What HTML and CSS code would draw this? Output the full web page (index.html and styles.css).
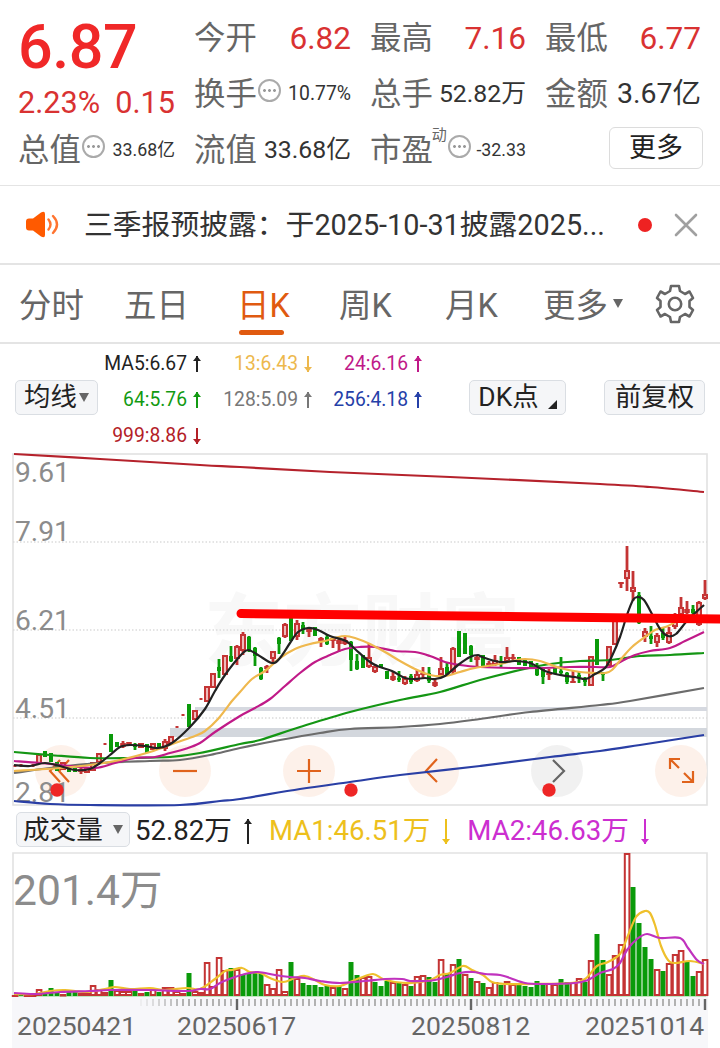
FILE: index.html
```html
<!DOCTYPE html>
<html lang="zh-CN">
<head>
    <meta charset="UTF-8">
    <meta name="viewport" content="width=device-width, initial-scale=1.0">
    <title>日K</title>
    <link rel="stylesheet" href="styles.css">
</head>
<body>

<header class="quote">
    <div class="price">6.87</div>
    <div class="change"><span>2.23%</span><span>0.15</span></div>
    <div class="stat open"><span class="name">今开</span><span class="value red">6.82</span></div>
    <div class="stat high"><span class="name">最高</span><span class="value red">7.16</span></div>
    <div class="stat low"><span class="name">最低</span><span class="value red">6.77</span></div>
    <div class="stat turnover"><span class="name">换手<i class="dots"></i></span><span class="value small">10.77%</span></div>
    <div class="stat"><span class="name">总手</span><span class="value medium">52.82万</span></div>
    <div class="stat"><span class="name">金额</span><span class="value large">3.67亿</span></div>
    <div class="stat"><span class="name">总值<i class="dots"></i></span><span class="value tiny">33.68亿</span></div>
    <div class="stat"><span class="name">流值</span><span class="value medium">33.68亿</span></div>
    <div class="stat"><span class="name">市盈<sup>动</sup><i class="dots"></i></span><span class="value tiny">-32.33</span></div>
    <div class="stat more"><button>更多</button></div>
</header>

<section class="notice">
    <svg class="speaker" width="34" height="30" viewBox="0 0 34 30">
        <path d="M4 8.5H8L16 2.5Q20 0.5 20 4V25Q20 28.500 16 26.500L8 20.500H4Q1 20.500 1 17.500V11.500Q1 8.500 4 8.500Z" fill="#ff5a00"/>
        <path d="M23.500 9.500q4 5 0 10M28 6q8 8.500 0 17" fill="none" stroke="#ff7430" stroke-width="2.4" stroke-linecap="round"/>
    </svg>
    <span class="notice-text">三季报预披露：于2025-10-31披露2025...</span>
    <span class="red-dot"></span>
    <svg class="close" width="24" height="24" viewBox="0 0 24 24">
        <path d="M2 2l20 20M22 2L2 22" stroke="#a0a0a0" stroke-width="2.6" stroke-linecap="round"/>
    </svg>
</section>

<nav class="tabs">
    <span>分时</span>
    <span>五日</span>
    <span class="active">日K</span>
    <span>周K</span>
    <span>月K</span>
    <span>更多<i class="caret"></i></span>
    <svg class="gear" width="40" height="40" viewBox="-20 -20 40 40">
        <path d="M-4 -18H4L5 -13L10 -10L14.500 -12.500L18 -6L14.500 -3V3L18 6L14.500 12.500L10 10L5 13L4 18H-4L-5 13L-10 10L-14.500 12.500L-18 6L-14.500 3V-3L-18 -6L-14.500 -12.500L-10 -10L-5 -13Z"/>
        <circle r="6.2"/>
    </svg>
</nav>

<section class="averages">
    <button class="chip ma">均线<i class="caret"></i></button>
    <div class="legend">
        <span class="black">MA5:6.67<i class="arrow up"></i></span>
        <span class="gold">13:6.43<i class="arrow down"></i></span>
        <span class="magenta">24:6.16<i class="arrow up"></i></span>
        <span class="green">64:5.76<i class="arrow up"></i></span>
        <span class="gray">128:5.09<i class="arrow up"></i></span>
        <span class="blue">256:4.18<i class="arrow up"></i></span>
        <span class="brick">999:8.86<i class="arrow down"></i></span>
    </div>
    <button class="chip dk">DK点<i class="corner"></i></button>
    <button class="chip adjust">前复权</button>
</section>

<svg class="chart" id="priceChart" viewBox="0 450 720 360"></svg>

<section class="volume-bar">
    <button class="chip vol">成交量<i class="caret"></i></button>
    <span class="black">52.82万<i class="arrow up"></i></span>
    <span class="vol-gold">MA1:46.51万<i class="arrow down"></i></span>
    <span class="vol-purple">MA2:46.63万<i class="arrow down"></i></span>
</section>

<svg class="chart" id="volumeChart" viewBox="0 850 720 147"></svg>

<footer class="axis">
    <svg id="ticks" width="696" height="14" viewBox="12 997 696 14"></svg>
    <div class="dates">
        <span>20250421</span>
        <span>20250617</span>
        <span>20250812</span>
        <span>20251014</span>
    </div>
</footer>

<script src="chart.js"></script>
</body>
</html>
```
FILE: styles.css
```css
* {
    box-sizing: border-box;
}
body {
    margin: 0;
    width: 720px;
    height: 1048px;
    overflow: hidden;
    background: #fff;
    color: #333;
    font-family: Roboto, "Noto Sans CJK SC", sans-serif;
}
button {
    font-family: inherit;
    color: #222;
    padding: 0;
}
i {
    font-style: normal;
    display: inline-block;
    flex: none;
}
svg {
    display: block;
}

/* quote header */
.quote {
    height: 186px;
    padding: 11px 19px 0 18px;
    display: grid;
    grid-template-columns: 157px 157px 156px 156px;
    grid-template-rows: 56px 56px 56px;
    column-gap: 19px;
    border-bottom: 1px solid #e4e4e4;
}
.price {
    grid-row: 1;
    grid-column: 1;
    color: #f02828;
    font-size: 61px;
    font-weight: 500;
    line-height: 73px;
    letter-spacing: -0.4px;
}
.change {
    grid-row: 2;
    grid-column: 1;
    display: flex;
    justify-content: space-between;
    color: #d93232;
    font-size: 30.6px;
    line-height: 71px;
    white-space: nowrap;
}
.stat {
    display: flex;
    justify-content: space-between;
    align-items: center;
    height: 56px;
    white-space: nowrap;
}
.name {
    display: flex;
    align-items: center;
    color: #666;
    font-size: 31.4px;
    line-height: 56px;
}
.name sup {
    font-size: 15px;
    line-height: 16px;
    align-self: flex-start;
    margin: 4px 0 0 -1px;
}
.dots {
    width: 23px;
    height: 23px;
    margin: -9px 0 0 1px;
    border: 2px solid #aaa;
    border-radius: 50%;
    background:
        radial-gradient(circle at 4.500px 9.5px, #999 1px, transparent 1.8px),
        radial-gradient(circle at 9.5px 9.5px, #999 1px, transparent 1.8px),
        radial-gradient(circle at 14.500px 9.5px, #999 1px, transparent 1.8px);
}
.value {
    margin-top: -2px;
    font-size: 31.6px;
    line-height: 56px;
}
.red {
    margin-top: 0;
    color: #d93232;
}
.large {
    font-size: 28.5px;
}
.medium {
    font-size: 24.8px;
}
.small {
    font-size: 19.4px;
}
.tiny {
    font-size: 17.8px;
}
.more {
    justify-content: flex-end;
}
.more button {
    width: 94px;
    height: 42px;
    margin: -6px -2px 0 0;
    border: 1px solid #dcdcdc;
    border-radius: 6px;
    background: #fff;
    font-size: 27px;
    line-height: 38px;
}

/* notice */
.notice {
    height: 79px;
    padding-left: 25px;
    display: flex;
    align-items: center;
    border-bottom: 2px solid #e4e4e4;
}
.notice-text {
    width: 522px;
    margin: -4px 0 0 25px;
    font-size: 28.8px;
    white-space: nowrap;
}
.red-dot {
    width: 14px;
    height: 14px;
    margin: 0 22px 0 32px;
    border-radius: 50%;
    background: #ee2222;
}

/* tabs */
.tabs {
    height: 79px;
    padding-left: 19px;
    display: grid;
    grid-template-columns: 105px 113px 102px 106px 98px 112px 40px;
    align-items: center;
    border-bottom: 2px solid #e4e4e4;
    color: #666;
    font-size: 32.4px;
    white-space: nowrap;
}
.tabs span {
    margin-top: -3px;
}
.tabs .active {
    position: relative;
    color: #e05a10;
}
.tabs .active::after {
    content: "";
    position: absolute;
    left: 2px;
    bottom: -9px;
    width: 45px;
    height: 5px;
    border-radius: 3px;
    background: #e05a10;
}
.gear path,
.gear circle {
    fill: none;
    stroke: #666;
    stroke-width: 2.6;
    stroke-linejoin: round;
}
.caret {
    border: 5.500px solid transparent;
    border-top: 9px solid #666;
    border-bottom: 0;
    vertical-align: middle;
    margin-left: 5px;
}
.tabs .caret {
    margin-bottom: 9px;
}

/* moving averages */
.averages {
    height: 106px;
    padding: 0 15px;
    display: flex;
    align-items: center;
}
.chip {
    height: 35px;
    border: 1px solid #dadee3;
    border-radius: 5px;
    background: #f5f6f8;
    font-size: 26.4px;
    line-height: 30px;
    white-space: nowrap;
    display: flex;
    align-items: center;
    justify-content: center;
}
.ma {
    width: 83px;
}
.ma .caret {
    margin-left: 2px;
}
.legend {
    display: grid;
    grid-template-columns: 104px 111px 110px;
    grid-auto-rows: 36px;
    margin: 5px 47px 0 -1px;
    font-size: 19.3px;
    line-height: 36px;
    text-align: right;
    white-space: nowrap;
}
.dk {
    width: 97px;
}
.adjust {
    width: 101px;
    margin-left: 38px;
}
.corner {
    border-left: 9px solid transparent;
    border-bottom: 9px solid #222;
    margin: 14px 0 0 9px;
}
.arrow {
    position: relative;
    width: 8px;
    height: 16px;
    margin-left: 6px;
    vertical-align: -2px;
}
.arrow::before {
    content: "";
    position: absolute;
    left: 3px;
    top: 0;
    width: 2px;
    height: 100%;
    background: currentColor;
}
.arrow::after {
    content: "";
    position: absolute;
    left: 0;
    border: 4px solid transparent;
}
.up::after {
    top: 0;
    border-top: 0;
    border-bottom: 5px solid currentColor;
}
.down::after {
    bottom: 0;
    border-bottom: 0;
    border-top: 5px solid currentColor;
}
.black { color: #222; }
.gold { color: #edb84c; }
.magenta { color: #c01888; }
.green { color: #129a12; }
.gray { color: #777; }
.blue { color: #2540a8; }
.brick { color: #b32027; }

/* charts */
.chart {
    width: 720px;
}
.frame {
    fill: none;
    stroke: #e2e2e2;
    stroke-width: 1.6;
}
.grid {
    stroke: #dcdcdc;
    stroke-width: 1.3;
    stroke-dasharray: 1.5 2;
}
.scale {
    fill: #8c8c8c;
    font-size: 28.2px;
}
.volume-scale {
    fill: #8c8c8c;
    font-size: 42.6px;
}
.watermark {
    fill: #f8f8f8;
    font-size: 79px;
    font-weight: 700;
}
.line {
    fill: none;
    stroke-width: 2.2;
    stroke-linejoin: round;
}
.volume-bar {
    height: 40px;
    padding-left: 16px;
    display: flex;
    align-items: center;
    font-size: 27.6px;
    white-space: nowrap;
}
.volume-bar span {
    margin-top: -5px;
}
.volume-bar .vol {
    width: 114px;
    margin: -1px 5px 0 0;
    font-size: 26.6px;
}
.vol .caret {
    margin-left: 10px;
}
.volume-bar .arrow {
    width: 8px;
    height: 25px;
    margin-left: 12px;
    vertical-align: -4px;
}
.volume-bar .vol-gold {
    color: #edc01c;
    margin-left: 17px;
}
.volume-bar .vol-purple {
    color: #cc2ed0;
    margin-left: 17px;
}

/* date axis */
.axis {
    width: 696px;
    height: 51px;
    margin-left: 12px;
    background: #f7f7fa;
}
.dates {
    display: grid;
    grid-template-columns: 160px 234px 174px 120px;
    padding-left: 5px;
    color: #666;
    font-size: 26.5px;
    line-height: 30px;
}
```
FILE: chart.js
```js
const RED = '#c43434';
const GREEN = '#0a9a0a';

// colour, high, low and, when the wick shows, body top and bottom
const candles = [
    ['r',765,767],['r',764,767],['r',765,767],['r',764,767],['r',754,764],['g',751,757],['g',753,762],['g',762,771],
    ['r',762,770],['g',768,772],['g',768,772],['r',767,774,769,772],['r',768,773],['r',762,771],['r',753,763],['r',743,745],
    ['g',734,752],['g',742,747],['r',741,748,743,747],['r',742,746],['g',743,750,744,747],['r',743,748],['g',744,753],['r',743,750],
    ['g',743,748],['r',739,751,741,749],['r',736,744],['r',726,728],['r',714,716],['g',704,727],['r',710,720],['r',698,700],
    ['r',686,702],['r',673,688],['g',659,678,667,671],['r',655,675],['g',646,662,656,661],['r',645,665,646,659],['r',632,655,634,651],['g',636,652,637,650],
    ['g',647,666,648,656],['g',667,680,668,679],['r',665,673,666,669],['r',651,662,651,659],['g',637,654,638,644],['r',623,638,624,637],['g',618,641],['r',620,640,623,637],
    ['g',622,634,625,630],['r',627,637,629,632],['g',627,636],['r',637,647,638,642],['g',635,645,637,644],['r',637,648,638,641],['r',638,652,640,644],['r',637,645,640,644],
    ['g',641,671,642,660],['g',654,670,661,669],['g',655,668],['r',644,668,657,667],['r',664,673,666,672],['g',664,668],['g',671,679],['r',672,681,676,680],
    ['g',671,682,678,680],['r',676,685,678,684],['g',674,684,676,682],['r',670,682,674,681],['r',667,678,673,675],['g',667,683,673,681],['r',678,687,682,686],['r',657,677,668,675],
    ['g',663,675,667,674],['r',647,674,648,672],['g',631,657],['g',633,654],['g',645,662,646,655],['r',655,667,657,660],['g',655,667],['r',661,667,663,666],
    ['r',655,666,660,665],['g',656,667,662,664],['r',647,663,657,662],['r',654,662,657,659],['g',657,665],['g',660,666],['g',661,668],['g',663,676,667,675],
    ['g',667,684,668,677],['r',669,680,673,675],['g',667,674],['g',657,675,671,673],['g',672,684,673,682],['r',670,683,681,683],['g',672,683,675,677],['g',677,686,680,682],
    ['r',656,686],['g',639,665],['g',672,681,672,675],['r',646,666],['r',620,645],['r',582,588,582,584],['r',546,591,570,579],['r',571,601,587,592],
    ['g',592,624,595,623],['r',628,642,631,637],['g',626,644,636,639],['r',633,647,635,643],['g',628,640,633,638],['r',627,644,632,643],['r',613,629,618,627],['r',597,617,607,615],
    ['r',601,614,609,613],['g',605,615,609,613],['r',601,626,602,625],['r',580,600,594,599]
];

const averages = [
    ['#b5222c', [14,454,100,459,200,465,240,467,330,472,450,477,600,484,650,487,704,492]],
    ['#2a3fa5', [14,801,50,804,90,805,180,805,220,801,240,799,300,789,350,782,400,775,480,766,550,757,600,751,640,745,704,735]],
    ['#6c6c6c', [14,773,50,768,100,763,150,761,180,760,210,755,240,748,280,740,320,733,350,729,400,727,440,724,480,719,530,712,600,705,630,701,704,688]],
    ['#149614', [14,752,50,755,90,758,130,758,170,757,200,753,240,744,260,740,300,727,350,712,400,700,440,692,480,680,520,670,550,664,580,661,610,660,640,656,670,655,704,653]],
    ['#c01a88', [14,761,40,763,70,766,95,768,115,763,135,758,155,757,170,753,185,749,200,743,215,732,240,716,255,708,270,699,285,686,300,673,315,662,330,655,345,649,360,647,375,647,395,651,415,652,430,656,445,662,460,665,480,667,510,668,540,668,570,667,595,667,610,667,622,661,635,655,650,651,670,648,685,641,704,632]],
    ['#efb84e', [14,771,60,768,90,765,120,760,150,752,175,743,195,736,205,731,218,719,232,701,240,692,252,679,265,671,280,658,295,649,310,644,325,641,335,638,345,636,355,638,370,644,385,652,400,661,415,669,430,675,445,676,460,672,475,668,500,664,512,661,525,659,540,661,560,668,580,672,595,673,605,673,612,670,622,658,632,647,645,637,655,630,668,626,680,619]],
    ['#222', [14,765,30,766,45,763,60,766,75,770,90,769,100,763,110,755,120,747,130,745,145,746,158,748,172,743,190,727,205,709,215,691,225,675,240,656,248,650,258,655,272,663,280,658,290,643,298,632,308,628,318,630,330,636,346,641,355,649,370,662,380,667,392,671,405,678,415,679,425,678,435,679,445,676,458,665,470,657,478,655,482,657,500,662,515,661,530,663,545,671,560,675,575,677,586,679,595,674,605,668,612,656,620,637,627,615,633,600,638,597,644,600,652,614,660,629,668,636,676,634,686,622,694,614,704,605]]
];

const volumes = 'r1 g1 r1 r1 r7 g4 g8 g4 r2 g4 g4 r3 r3 r11 r7 r4 g16 r6 r5 r5 g5 r3 g4 r7 g4 r9 r9 r5 r3 g23 r5 r4 r34 r10 r39 r26 g28 r27 g22 g23 g24 g24 r12 r8 r27 r5 g34 r18 g13 g11 g11 g9 g10 r9 g10 r8 g34 g21 r19 r20 g14 g10 g15 r14 g13 r12 g10 r20 r21 g19 g14 r37 g23 r32 g37 r22 g18 r15 g13 r9 r14 g11 r15 r12 g11 g10 g9 g15 g12 r13 r12 g17 g14 r14 r18 g14 r36 g62 g36 r22 r41 r52 r143 g109 g73 g49 g37 r27 g25 r33 r42 r46 g35 g20 r25 r37'.split(' ');

const volumeAverages = [
    ['#efc02c', [14,994,35,994,50,991,65,990,85,992,105,989,115,987,130,989,150,988,165,990,187,988,200,989,215,979,225,971,232,970,242,968,250,972,260,973,270,978,283,982,295,978,305,976,315,980,325,985,340,986,350,982,360,978,373,974,383,979,395,982,412,983,430,980,440,975,450,973,463,966,472,970,483,975,492,982,505,984,530,984,570,983,585,979,597,966,608,962,620,954,627,938,636,917,645,911,650,913,655,925,661,946,668,960,675,963,690,961,704,964]],
    ['#c032be', [14,993,35,994,60,992,90,991,110,990,150,990,187,991,200,989,210,989,220,983,232,978,245,974,258,972,275,975,290,977,305,978,320,981,340,983,365,981,385,979,402,979,410,981,425,981,435,980,447,977,460,973,473,972,485,974,500,975,510,978,525,983,540,984,575,983,588,980,600,973,613,969,620,963,627,950,637,939,647,934,660,938,680,938,688,948,697,960,704,964]]
];

// Catmull-Rom through the points, written out as cubic segments
function smooth(flat) {
    const p = [];
    for (let i = 0; i < flat.length; i += 2) p.push([flat[i], flat[i + 1]]);
    let d = `M${p[0]}`;
    for (let i = 0; i < p.length - 1; i++) {
        const a = p[i - 1] || p[i], b = p[i], c = p[i + 1], e = p[i + 2] || c;
        d += `C${b[0] + (c[0] - a[0]) / 6} ${b[1] + (c[1] - a[1]) / 6} ${c[0] - (e[0] - b[0]) / 6} ${c[1] - (e[1] - b[1]) / 6} ${c[0]} ${c[1]}`;
    }
    return d;
}

function drawLines(list) {
    return list.map(([color, points]) => `<path class="line" stroke="${color}" d="${smooth(points)}"/>`).join('');
}

function drawCandle([type, high, low, top = high, bottom = low], i) {
    const x = 15 + 6 * i;
    const color = type === 'r' ? RED : GREEN;
    let out = '';
    if (type === 'g') {
        out += `<rect x="${x - 1.4}" y="${high}" width="2.8" height="${low - high}" fill="${color}"/>`;
        out += `<rect x="${x - 2}" y="${top}" width="4" height="${bottom - top}" fill="${color}"/>`;
    } else if (low - high < 4) {
        out += `<rect x="${x - 1.5}" y="${high}" width="3" height="${low - high}" fill="${color}"/>`;
    } else if (bottom - top < 5) {
        out += `<rect x="${x - 1.4}" y="${high}" width="2.8" height="${low - high}" fill="${color}"/>`;
        out += `<rect x="${x - 2.8}" y="${top}" width="5.6" height="${bottom - top}" fill="${color}"/>`;
    } else {
        out += `<path d="M${x} ${high}V${top}M${x} ${bottom}V${low}" stroke="${color}" stroke-width="2.8"/>`;
        out += `<rect x="${x - 2}" y="${top + 1}" width="4" height="${bottom - top - 2}" fill="#eebcbc" stroke="${color}" stroke-width="2"/>`;
    }
    return out;
}

function drawVolume(item, i) {
    const x = 15 + 6 * i;
    const h = Number(item.slice(1));
    if (item[0] === 'g') {
        return `<rect x="${x - 2.5}" y="${996 - h}" width="5" height="${h}" fill="${GREEN}"/>`;
    }
    return `<rect x="${x - 2.2}" y="${997 - h}" width="4.6" height="${Math.max(h - 2, 0.5)}" fill="#fff" stroke="${RED}" stroke-width="2"/>`;
}

function navButton(x, icon, fill = '#fdefe8', stroke = '#e0631c') {
    return `<circle cx="${x}" cy="771" r="26" fill="${fill}" fill-opacity="0.9"/>
        <path d="${icon}" fill="none" stroke="${stroke}" stroke-width="2.2"/>`;
}

const price = document.getElementById('priceChart');
const gridLines = [542, 630, 718].map(y => `<path class="grid" d="M13 ${y}H707"/>`).join('');
const labels = [['9.61', 482], ['7.91', 541], ['6.21', 630], ['4.51', 718], ['2.81', 802]]
    .map(([t, y]) => `<text class="scale" x="15" y="${y}">${t}</text>`).join('');
price.innerHTML = `
    <text class="watermark" x="204" y="660">东方财富</text>
    <rect class="frame" x="13" y="454" width="694" height="351"/>
    ${gridLines}
    <rect x="195" y="707" width="512" height="4" fill="#d6d9e0"/>
    <rect x="170" y="728" width="537" height="9" fill="#d3d7dd"/>
    ${navButton(61, 'M60 760L50 771L60 782M69 760L59 771L69 782')}
    ${navButton(185, 'M173 771H197')}
    ${navButton(309, 'M297 771H321M309 759V783')}
    ${navButton(433, 'M437 759L426 771L437 782')}
    ${navButton(557, 'M553 760L564 771L553 782', '#f0f0f0', '#666')}
    ${navButton(681, 'M680 759H670V769M670 759L679 768M684 773L692 781M693 771V782H682')}
    ${labels}
    ${candles.map(drawCandle).join('')}
    ${drawLines(averages)}
    <path d="M241 613.5L724 619" stroke="#ff0000" stroke-width="9" stroke-linecap="round"/>
    <circle cx="57" cy="790" r="6.7" fill="#ee2626"/>
    <circle cx="351" cy="790" r="6.7" fill="#ee2626"/>
    <circle cx="549" cy="790" r="6.7" fill="#ee2626"/>`;

document.getElementById('volumeChart').innerHTML = `
    <path class="frame" d="M13 997V853H707V997"/>
    <text class="volume-scale" x="13" y="905">201.4万</text>
    <path d="M12 996.5H706" stroke="#bfe6bf"/>
    ${volumes.map(drawVolume).join('')}
    ${drawLines(volumeAverages)}`;

let ticks = '';
for (let i = 21; i < 116; i++) {
    const x = 15 + 6 * i;
    const major = (115 - i) % 39 === 0;
    ticks += `<path d="M${x} 999V${major ? 1010 : 1006}" stroke="${major ? '#666' : '#aaa'}" stroke-width="${major ? 2.4 : 1.8}" opacity="${Math.min(1, (i - 20) / 8)}"/>`;
}
document.getElementById('ticks').innerHTML = ticks;
```
